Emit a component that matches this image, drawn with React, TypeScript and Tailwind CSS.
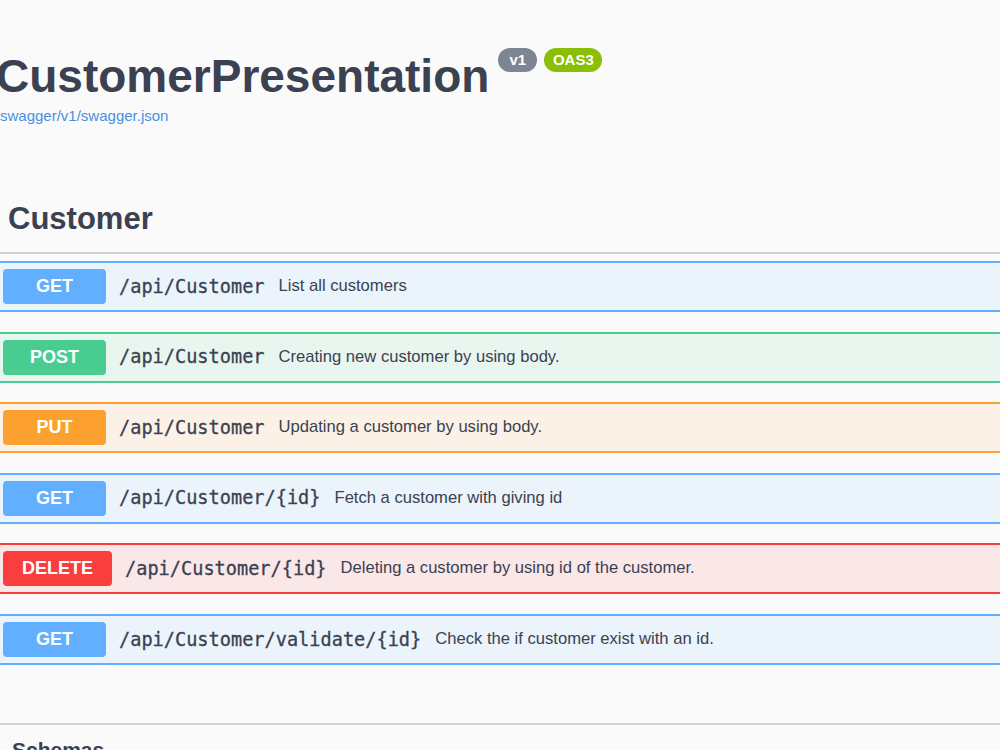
const endpoints = [
  { method: "GET", path: "/api/Customer", summary: "List all customers" },
  { method: "POST", path: "/api/Customer", summary: "Creating new customer by using body." },
  { method: "PUT", path: "/api/Customer", summary: "Updating a customer by using body." },
  { method: "GET", path: "/api/Customer/{id}", summary: "Fetch a customer with giving id" },
  { method: "DELETE", path: "/api/Customer/{id}", summary: "Deleting a customer by using id of the customer." },
  { method: "GET", path: "/api/Customer/validate/{id}", summary: "Check the if customer exist with an id." },
];

// colours per http verb: row background, row border, badge
const methodStyles: Record<string, { row: string; badge: string }> = {
  GET: { row: "bg-[#ebf3fb] border-[#61affe]", badge: "bg-[#61affe]" },
  POST: { row: "bg-[#e8f6ef] border-[#49cc90]", badge: "bg-[#49cc90]" },
  PUT: { row: "bg-[#fbf1e6] border-[#fca130]", badge: "bg-[#fca130]" },
  DELETE: { row: "bg-[#fae7e7] border-[#f93e3e]", badge: "bg-[#f93e3e]" },
};

function OperationRow({ method, path, summary }: { method: string; path: string; summary: string }) {
  const style = methodStyles[method];
  return (
    <div className={`h-[51px] border-y-2 flex items-center ${style.row}`}>
      <span
        className={`ml-[3px] h-[35px] min-w-[103px] px-[19px] rounded-[4px] flex items-center justify-center text-white font-bold text-[18px] ${style.badge}`}
      >
        {method}
      </span>
      <span className="ml-[13px] font-['DejaVu_Sans_Mono',monospace] text-[18.6px] text-[#3b4151] [-webkit-text-stroke:0.3px_#3b4151]">
        {path}
      </span>
      <span className="ml-[14px] text-[16.6px] text-[#3b4151]">{summary}</span>
    </div>
  );
}

export default function App() {
  return (
    <div className="h-[750px] w-full overflow-hidden bg-[#fafafa] text-[#3b4151] font-['Liberation_Sans',Arial,sans-serif]">
      {/* api info */}
      <div className="pt-[48px]">
        <div className="flex items-start">
          <h1 className="-ml-[4px] mt-[5px] text-[46px] leading-none font-bold">CustomerPresentation</h1>
          <div className="ml-[9px] flex gap-[7px]">
            <span className="h-[24px] w-[39px] rounded-full bg-[#7d8492] text-white text-[15px] font-bold flex items-center justify-center">
              v1
            </span>
            <span className="h-[24px] w-[58px] rounded-full bg-[#89bf04] text-white text-[15px] font-bold flex items-center justify-center">
              OAS3
            </span>
          </div>
        </div>
        <a className="block mt-[9px] text-[15px] leading-none text-[#4990e2]">swagger/v1/swagger.json</a>
      </div>

      {/* tag section */}
      <div className="mt-[80px]">
        <h3 className="pl-[8px] pb-[18px] text-[31px] leading-none font-bold border-b-2 border-[#d0d2d5]">Customer</h3>
        <div className="mt-[7px] flex flex-col gap-[19.6px]">
          {endpoints.map((op, i) => (
            <OperationRow key={i} method={op.method} path={op.path} summary={op.summary} />
          ))}
        </div>
      </div>

      {/* schemas */}
      <div className="mt-[58px] border-t-2 border-[#d0d2d5] pt-[14px] pl-[12px]">
        <h4 className="text-[21px] leading-none font-bold">Schemas</h4>
      </div>
    </div>
  );
}
